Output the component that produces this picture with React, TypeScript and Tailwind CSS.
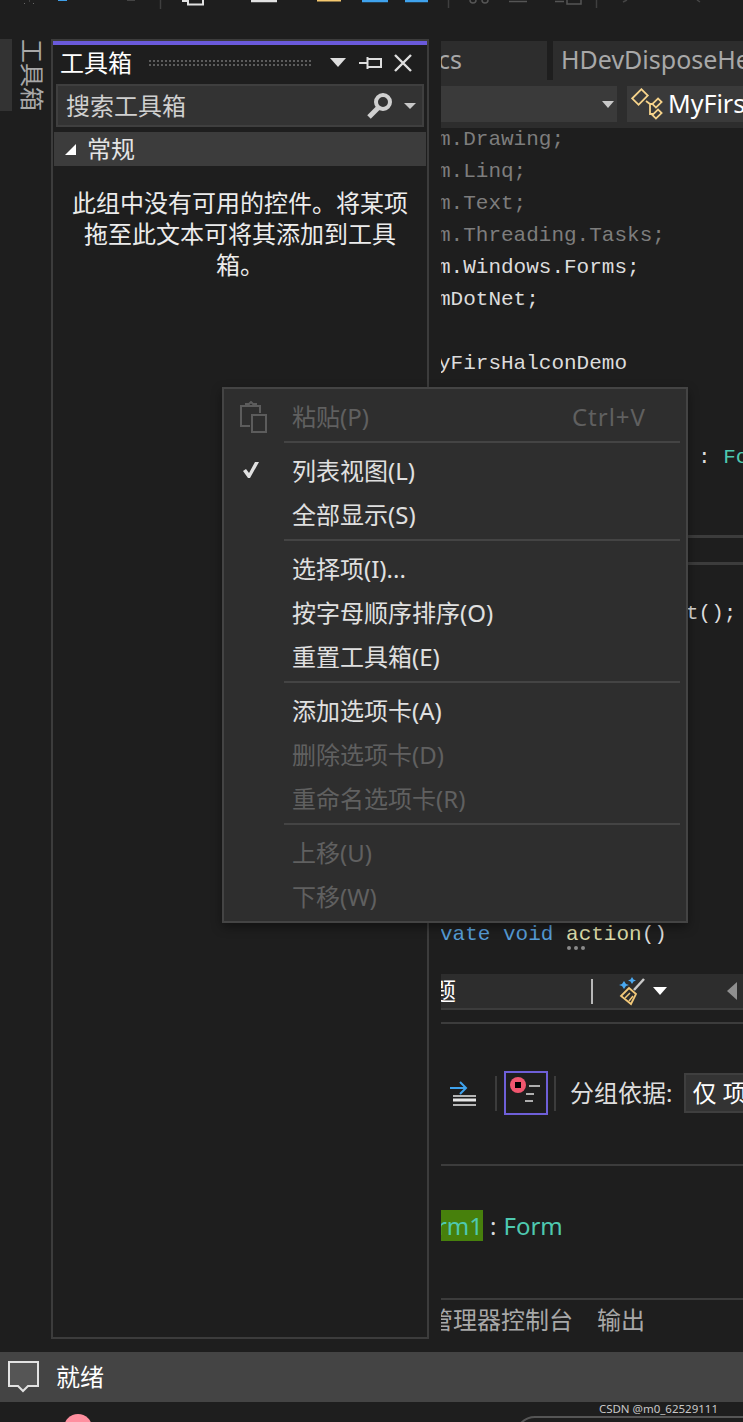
const sansFont = "font-['Noto_Sans','Noto_Sans_CJK_SC',sans-serif]";
const monoFont = "font-['Liberation_Mono','Noto_Sans_CJK_SC',monospace]";

const codeLines = [
  { text: 'm.Drawing;', color: 'text-[#7d7d7d]' },
  { text: 'm.Linq;', color: 'text-[#7d7d7d]' },
  { text: 'm.Text;', color: 'text-[#7d7d7d]' },
  { text: 'm.Threading.Tasks;', color: 'text-[#7d7d7d]' },
  { text: 'm.Windows.Forms;', color: 'text-[#dcdcdc]' },
  { text: 'mDotNet;', color: 'text-[#dcdcdc]' },
  { text: ' ', color: 'text-[#dcdcdc]' },
  { text: 'yFirsHalconDemo', color: 'text-[#dcdcdc]' },
];

type MenuEntry = { label?: string; disabled?: boolean; checked?: boolean; shortcut?: string; paste?: boolean };

const menuItems: MenuEntry[] = [
  { label: '粘贴(P)', disabled: true, shortcut: 'Ctrl+V', paste: true },
  {},
  { label: '列表视图(L)', checked: true },
  { label: '全部显示(S)' },
  {},
  { label: '选择项(I)...' },
  { label: '按字母顺序排序(O)' },
  { label: '重置工具箱(E)' },
  {},
  { label: '添加选项卡(A)' },
  { label: '删除选项卡(D)', disabled: true },
  { label: '重命名选项卡(R)', disabled: true },
  {},
  { label: '上移(U)', disabled: true },
  { label: '下移(W)', disabled: true },
];

function TopIcons() {
  return (
    <svg width="743" height="12" viewBox="0 0 743 12" fill="none">
      <path d="M24 3.500h1M33 3.500h1M29 1h1" stroke="#666" />
      <path d="M58 0.500h9" stroke="#3f9fe8" />
      <path d="M127 0.500h8" stroke="#444" />
      <path d="M160.500 0v9" stroke="#3f3f3f" strokeWidth="1.500" />
      <path d="M182 1h6v3.500h15V0M188 1V0" stroke="#e2e2e2" strokeWidth="2" />
      <path d="M251 1h26" stroke="#e2e2e2" strokeWidth="2.500" />
      <path d="M317 0.500h24" stroke="#f5c86e" strokeWidth="2" />
      <path d="M362 1h26M405 1h23" stroke="#3fa3ee" strokeWidth="2.500" />
      <path d="M448.500 0v8" stroke="#3f3f3f" strokeWidth="1.500" />
      <path d="M470 0a3 3 0 0 0 6 0M482 0a3 3 0 0 0 6 0" stroke="#555" strokeWidth="1.500" />
      <path d="M509 1.500h18" stroke="#555" strokeWidth="1.500" />
      <path d="M555 1.500h9M567 0v4h14V0" stroke="#555" strokeWidth="1.500" />
      <path d="M596.500 0v8" stroke="#3f3f3f" strokeWidth="1.500" />
      <path d="M623 2l4-2M697 0l3 2" stroke="#444" strokeWidth="1.500" />
    </svg>
  );
}

function PinIcon() {
  return (
    <svg className="shrink-0" width="24" height="18" viewBox="0 0 24 18" fill="none">
      <path d="M0 9h8M8.500 3v12" stroke="#dedede" strokeWidth="2" />
      <path d="M9 5h13v8H9" stroke="#dedede" strokeWidth="2" />
    </svg>
  );
}

function SearchIcon() {
  return (
    <svg className="shrink-0" width="28" height="28" viewBox="0 0 28 28" fill="none">
      <circle cx="17" cy="10" r="7" stroke="#d0d0d0" strokeWidth="4" />
      <path d="M12 16L3 25" stroke="#d0d0d0" strokeWidth="5" />
    </svg>
  );
}

function ClassIcon() {
  return (
    <svg className="shrink-0" width="32" height="32" viewBox="0 0 32 32" fill="none" stroke="#f6d38a" strokeWidth="1.800">
      <rect x="2.500" y="4.500" width="13" height="9" transform="rotate(-45 9 9)" />
      <path d="M15 13l4 3h3M19 16v10h3" />
      <rect x="22" y="12.500" width="8" height="5" transform="rotate(-45 26 15)" />
      <rect x="22" y="23.500" width="8" height="5" transform="rotate(-45 26 26)" />
    </svg>
  );
}

function BrushIcon() {
  return (
    <svg className="shrink-0" width="28" height="30" viewBox="0 0 28 30">
      <path d="M15 14L25 3" stroke="#c8c8c8" strokeWidth="2.500" fill="none" />
      <path d="M10 12l7 6-5 10-10-8z" fill="none" stroke="#f2c879" strokeWidth="1.800" />
      <path d="M6 22l5-5M10 25l4-5" stroke="#f2c879" strokeWidth="1.500" />
      <path d="M5 5l2 3 3 1-3 1-2 3-2-3-3-1 3-1zM13 1l1.500 2.500 2.500 1-2.500 1L13 8l-1.500-2.500-2.500-1 2.500-1z" fill="#4aa8f0" />
    </svg>
  );
}

function IndentIcon() {
  return (
    <svg className="shrink-0" width="28" height="28" viewBox="0 0 28 28" fill="none">
      <path d="M1 9h15M11 3l6 6-6 6" stroke="#3fa3ee" strokeWidth="2" />
      <path d="M4 17h23" stroke="#b5b5b5" strokeWidth="2" />
      <path d="M4 21h23" stroke="#e6e6e6" strokeWidth="3" />
      <path d="M4 26h23" stroke="#b5b5b5" strokeWidth="2" />
    </svg>
  );
}

function BreakpointIcon() {
  return (
    <svg className="shrink-0" width="32" height="32" viewBox="0 0 32 32" fill="none">
      <circle cx="8" cy="8" r="8" fill="#f0566e" />
      <rect x="5" y="5" width="6" height="6" fill="#000" />
      <path d="M19 9h11M16 17h8M15 24h8" stroke="#dedede" strokeWidth="1.600" />
    </svg>
  );
}

function CommentIcon() {
  return (
    <svg className="shrink-0" width="34" height="34" viewBox="0 0 34 34" fill="#555">
      <path d="M2 2h29v24H21l-5 5-5-5H2z" stroke="#e2e2e2" strokeWidth="2" />
    </svg>
  );
}

function PasteIcon() {
  return (
    <svg className="ml-[16px] shrink-0" width="27" height="32" viewBox="0 0 27 32" fill="none" stroke="#5c5c5c" strokeWidth="2">
      <path d="M10 25H1V5h19v7" />
      <path d="M6 5V3h3l2-2 2 2h3v2" />
      <rect x="12" y="14" width="14" height="17" />
    </svg>
  );
}

function CheckMark() {
  return (
    <svg className="-mt-[3px] ml-[19px] shrink-0" width="16" height="16" viewBox="0 0 16 16">
      <polygon points="0,9 3,7 6,11 12,0 16,0 7,16 5,16" fill="#e0e0e0" />
    </svg>
  );
}

function ContextMenu() {
  return (
    <div className="absolute left-[222px] top-[387px] w-[466px] border-2 border-[#444444] bg-[#2e2e2e] pt-[6px] pb-[2px] shadow-[0_4px_10px_rgba(0,0,0,0.4)]">
      {menuItems.map((item, index) =>
        item.label ? (
          <div
            key={index}
            className={`flex h-11 items-center text-[24px] ${item.disabled ? 'text-[#606060]' : 'text-[#e0e0e0]'}`}
          >
            <div className="flex w-[68px] shrink-0 items-center">
              {item.paste && <PasteIcon />}
              {item.checked && <CheckMark />}
            </div>
            <span className="flex-1">{item.label}</span>
            {item.shortcut && <span className="mr-[40px] tracking-[1px]">{item.shortcut}</span>}
          </div>
        ) : (
          <div key={index} className="h-[10px] pt-[2px] pl-[60px] pr-[6px]">
            <div className="h-[2px] bg-[#444444]" />
          </div>
        )
      )}
    </div>
  );
}

function ToolboxPanel() {
  return (
    <div className="flex h-[1300px] w-[378px] shrink-0 flex-col border-2 border-[#3c3c3c] px-[1px]">
      <div className="-mx-[1px] h-1 bg-[#6a5adb]" />
      <div className="flex h-[39px] shrink-0 items-center pb-[4px] pl-[6px]">
        <span className="shrink-0 text-[24px] text-white">工具箱</span>
        <div className="ml-[16px] h-[7px] w-[165px] shrink-0 bg-[radial-gradient(#5c5c5c_1px,transparent_1px)] bg-[length:4px_4px]" />
        <div className="ml-[17px] h-0 w-0 shrink-0 border-x-[8px] border-t-[9px] border-x-transparent border-t-[#dedede]" />
        <div className="ml-[13px] shrink-0"><PinIcon /></div>
        <svg className="ml-[10px] shrink-0" width="20" height="20" viewBox="0 0 20 20" fill="none">
          <path d="M2 2l16 16M18 2L2 18" stroke="#dedede" strokeWidth="2.400" />
        </svg>
      </div>
      <div className="mx-[2px] flex h-[43px] shrink-0 items-center border-2 border-[#3f3f3f] bg-[#333333] pl-[8px] pr-[6px] text-[24px] text-[#d0d0d0]">
        <span className="flex-1">搜索工具箱</span>
        <SearchIcon />
        <div className="ml-[10px] mt-[1px] h-0 w-0 shrink-0 border-x-[6px] border-t-[6px] border-x-transparent border-t-[#c8c8c8]" />
      </div>
      <div className="mt-[5px] flex h-[34px] shrink-0 items-center bg-[#3c3c3c] pl-[11px] text-[24px] text-[#e4e4e4]">
        <div className="h-0 w-0 border-b-[11px] border-l-[11px] border-b-white border-l-transparent" />
        <span className="ml-[11px]">常规</span>
      </div>
      <p className="mt-[21px] px-[13px] text-center text-[24px] leading-[31px] text-[#ececec]">
        此组中没有可用的控件。将某项拖至此文本可将其添加到工具箱。
      </p>
    </div>
  );
}

function EditorColumn() {
  return (
    <div className="ml-[12px] flex min-w-0 flex-1 flex-col overflow-hidden pt-[2px]">
      <div className="flex h-[39px] shrink-0 gap-[6px] text-[25px] text-[#a8a8a8]">
        <div className="w-[106px] shrink-0 bg-[#2d2d2d] leading-[36px]">
          <span className="-ml-[3px]">cs</span>
        </div>
        <div className="flex-1 overflow-hidden whitespace-nowrap bg-[#2d2d2d] pl-[8px] leading-[36px]">HDevDisposeHe</div>
      </div>
      <div className="flex h-[48px] shrink-0 bg-[#2d2d2d] py-[6px]">
        <div className="flex w-[176px] shrink-0 items-center justify-end bg-[#3a3a3a] pr-[3px]">
          <div className="h-0 w-0 border-x-[6px] border-t-[7px] border-x-transparent border-t-[#c8c8c8]" />
        </div>
        <div className="ml-[10px] flex flex-1 items-center overflow-hidden whitespace-nowrap bg-[#3a3a3a] pl-[4px] text-[25px] text-white">
          <ClassIcon />
          <span className="ml-[5px]">MyFirs</span>
        </div>
      </div>
      <div className={`${monoFont} text-[21px]`}>
        {codeLines.map((line, index) => (
          <div key={index} className={`-ml-[3px] h-8 whitespace-pre leading-[24px] ${line.color}`}>
            {line.text}
          </div>
        ))}
        <div className="mt-[62px] h-8 whitespace-pre pl-[257px] leading-[24px]">
          <span className="text-[#dcdcdc]">: </span>
          <span className="text-[#4ec9b0]">Fo</span>
        </div>
        <div className="mt-[57px] h-[3px] bg-[#3c3c3c]" />
        <div className="mt-[24px] h-[3px] bg-[#3c3c3c]" />
        <div className="mt-[37px] h-8 whitespace-pre pl-[245px] leading-[24px] text-[#dcdcdc]">t();</div>
        <div className="mt-[289px] h-8 whitespace-pre -ml-[1px] leading-[24px]">
          <span className="text-[#569cd6]">vate void </span>
          <span className="relative text-[#dcdcaa]">
            action
            <span className="absolute left-[1px] top-[23px] flex gap-[3px]">
              <span className="h-1 w-1 rounded-full bg-[#8a8a8a]" />
              <span className="h-1 w-1 rounded-full bg-[#8a8a8a]" />
              <span className="h-1 w-1 rounded-full bg-[#8a8a8a]" />
            </span>
          </span>
          <span className="text-[#dcdcdc]">()</span>
        </div>
      </div>
      <div className="mt-[19px] flex h-[36px] shrink-0 items-center border-b-2 border-[#3c3c3c] bg-[#2d2d2d] text-[24px] text-white">
        <div className="w-[150px] shrink-0 overflow-hidden whitespace-nowrap">
          <span className="-ml-[9px] inline-block">题</span>
        </div>
        <div className="h-[25px] w-[2px] shrink-0 bg-[#b8b8b8]" />
        <div className="ml-[26px] shrink-0"><BrushIcon /></div>
        <div className="ml-[6px] h-0 w-0 shrink-0 border-x-[7px] border-t-[8px] border-x-transparent border-t-white" />
        <div className="ml-[60px] h-0 w-0 shrink-0 border-y-[9px] border-r-[10px] border-y-transparent border-r-[#8f8f8f]" />
      </div>
      <div className="mt-[12px] h-[2px] shrink-0 bg-[#3c3c3c]" />
      <div className="mt-[47px] flex h-[44px] shrink-0 items-center text-[24px] text-[#dedede]">
        <div className="ml-[8px] shrink-0"><IndentIcon /></div>
        <div className="ml-[18px] h-[35px] w-[2px] shrink-0 bg-[#3c3c3c]" />
        <div className="ml-[7px] flex h-[44px] w-[44px] shrink-0 items-start border-2 border-[#6e5fd8] pl-[4px] pt-[4px]">
          <BreakpointIcon />
        </div>
        <div className="ml-[6px] h-[35px] w-[2px] shrink-0 bg-[#3c3c3c]" />
        <span className="ml-[14px] shrink-0">分组依据:</span>
        <div className="ml-[12px] flex h-[40px] w-[80px] shrink-0 items-center whitespace-nowrap border-2 border-[#3f3f3f] bg-[#333333] pl-[6px] text-white">
          仅 项
        </div>
      </div>
      <div className="mt-[49px] h-[2px] shrink-0 bg-[#3c3c3c]" />
      <div className="mt-[44px] flex h-[31px] shrink-0 items-center whitespace-pre text-[24px] text-[#4ec9b0]">
        <span className="flex h-[31px] w-[42px] items-center justify-end bg-[#47800c]">rm1</span>
        <span className="ml-[7px] text-[#dcdcdc]">:</span>
        <span className="ml-[7px]">Form</span>
      </div>
      <div className="mt-[57px] h-[2px] shrink-0 bg-[#3c3c3c]" />
      <div className="mt-[2px] flex h-[36px] shrink-0 items-center whitespace-nowrap text-[24px] text-[#a8a8a8]">
        <div className="w-[132px] shrink-0 overflow-hidden">
          <div className="-ml-[12px] w-[144px]">管理器控制台</div>
        </div>
        <span className="ml-[24px]">输出</span>
      </div>
    </div>
  );
}

export default function App() {
  return (
    <div className={`${sansFont} relative flex h-[1422px] w-[743px] flex-col overflow-hidden bg-[#1e1e1e]`}>
      <div className="h-[39px] shrink-0">
        <TopIcons />
      </div>

      <div className="flex h-[1313px] shrink-0 items-start">
        <div className="flex h-[72px] w-[51px] shrink-0">
          <div className="h-full w-[12px] bg-[#333333]" />
          <div className="ml-[8px] text-[24px] leading-[24px] text-[#a8a8a8] [text-orientation:sideways] [writing-mode:vertical-rl]">工具箱</div>
        </div>
        <ToolboxPanel />
        <EditorColumn />
      </div>

      <div className="flex h-[50px] shrink-0 items-center bg-[#444444] pl-[7px] text-[24px] text-white">
        <CommentIcon />
        <span className="ml-[15px]">就绪</span>
      </div>

      <div className="flex h-5 shrink-0">
        <div className="ml-[64px] mt-[12px] h-[28px] w-[28px] shrink-0 rounded-full bg-[#ff8f9f]" />
        <div className="ml-[423px] mt-[14px] h-[30px] w-[300px] shrink-0 rounded-t-[20px] border-2 border-[#555555]" />
      </div>

      <ContextMenu />

      <span className="absolute right-[25px] top-[1400px] text-[11.5px] text-[#c8c8c8]">CSDN @m0_62529111</span>
    </div>
  );
}
